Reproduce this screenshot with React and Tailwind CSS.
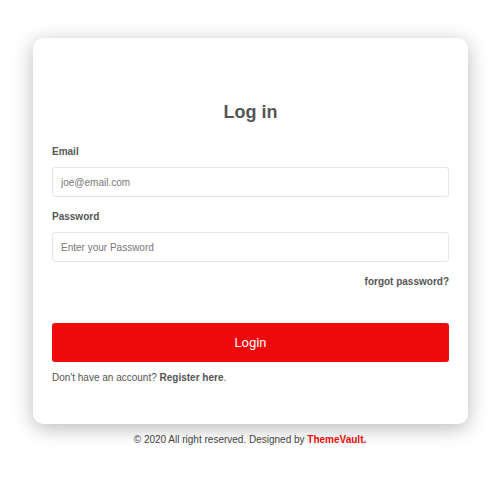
import React from "react";

export default function App() {
  return (
    <div className="min-h-[500px] bg-white pt-[38px] font-['Liberation_Sans',Arial,sans-serif] text-[#555]">
      <div className="ml-[33px] w-[435px] rounded-[10px] bg-white px-[19px] pt-[61px] pb-[38px] shadow-[0_4px_20px_rgba(0,0,0,0.28)]">
        <h2 className="mb-[18px] text-center text-[18px] font-bold leading-[27px] text-[#555]">
          Log in
        </h2>
        <form onSubmit={(e) => e.preventDefault()}>
          <label className="block text-[10px] font-bold leading-[16px]">Email</label>
          <input
            type="email"
            placeholder="joe@email.com"
            className="mt-[7px] block h-[30px] w-full rounded-[3px] border border-[#e6e6e6] px-[8px] text-[10px] text-[#555] outline-none placeholder:text-[#777]"
          />
          <label className="mt-[12px] block text-[10px] font-bold leading-[16px]">Password</label>
          <input
            type="password"
            placeholder="Enter your Password"
            className="mt-[7px] block h-[30px] w-full rounded-[3px] border border-[#e6e6e6] px-[8px] text-[10px] text-[#555] outline-none placeholder:text-[#777]"
          />
          <div className="mt-[12px] text-right text-[10px] font-bold leading-[16px]">
            <a href="#" className="text-[#555]">forgot password?</a>
          </div>
          <button
            type="submit"
            className="mt-[33px] block h-[39px] w-full rounded-[3px] bg-[#ee0a0a] font-['Roboto',sans-serif] text-[13px] text-white"
          >
            Login
          </button>
        </form>
        <p className="mt-[8px] text-[10px] leading-[16px]">
          Don't have an account? <a href="#" className="font-bold text-[#555]">Register here</a>.
        </p>
      </div>
      <p className="mt-[8px] text-center text-[10px] leading-[16px] text-[#444]">
        © 2020 All right reserved. Designed by{" "}
        <a href="#" className="font-bold text-[#ee0a0a]">ThemeVault.</a>
      </p>
    </div>
  );
}
